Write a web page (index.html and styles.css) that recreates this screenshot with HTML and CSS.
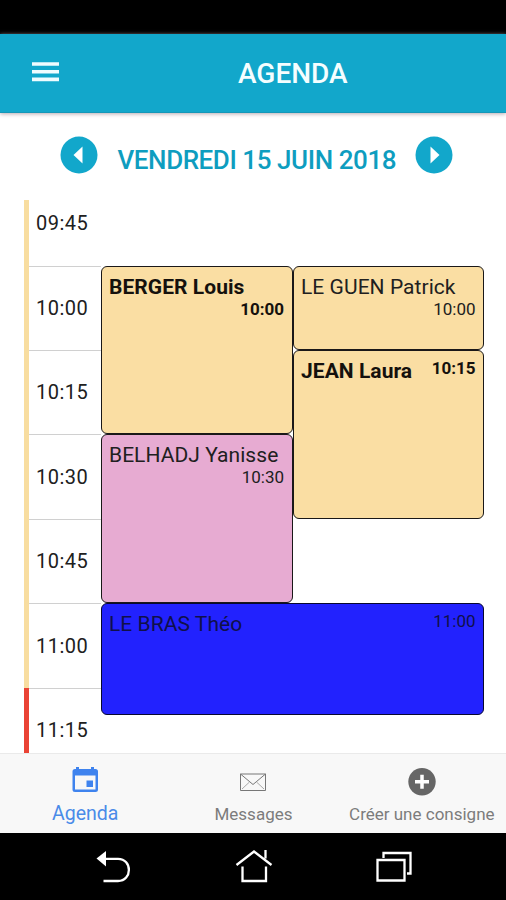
FILE: index.html
```html
<!DOCTYPE html>
<html lang="fr">
<head>
<meta charset="utf-8">
<title>Agenda</title>
<link rel="stylesheet" href="styles.css">
</head>
<body>
<div class="status"></div>
<header class="header">
  <svg class="menu" viewBox="0 0 27 20"><path d="M0 2h27M0 9.800h27M0 17.400h27"/></svg>
  <h1 class="title">AGENDA</h1>
</header>
<main class="main">
  <div class="datebar">
    <svg class="arrow" viewBox="0 0 38 38"><circle cx="19" cy="19" r="18.500"/><path d="M22.500 10.500v17L13.500 19z"/></svg>
    <div class="date">VENDREDI 15 JUIN 2018</div>
    <svg class="arrow" viewBox="0 0 38 38"><circle cx="19" cy="19" r="18.500"/><path d="M15.500 10.500v17L24.500 19z"/></svg>
  </div>
  <div class="agenda">
    <div class="bar open"></div>
    <div class="bar closed"></div>
    <div class="slot s1">09:45</div>
    <div class="slot s2">10:00</div>
    <div class="slot s3">10:15</div>
    <div class="slot s4">10:30</div>
    <div class="slot s5">10:45</div>
    <div class="slot s6">11:00</div>
    <div class="slot s7">11:15</div>
    <div class="event berger bold"><span class="name">BERGER Louis</span><span class="time">10:00</span></div>
    <div class="event leguen"><span class="name">LE GUEN Patrick</span><span class="time">10:00</span></div>
    <div class="event jean bold"><span class="name">JEAN Laura</span><span class="time">10:15</span></div>
    <div class="event belhadj"><span class="name">BELHADJ Yanisse</span><span class="time">10:30</span></div>
    <div class="event lebras"><span class="name">LE BRAS Théo</span><span class="time">11:00</span></div>
  </div>
</main>
<nav class="tabs">
  <div class="tab active">
    <svg class="icon" viewBox="0 0 28 28"><path fill-rule="evenodd" d="M5 1h3v2h12V1h3v2h1.500q2.500 0 2.500 2.500v18q0 2.500-2.500 2.500h-20.500q-2.500 0-2.500-2.500V5.500q0-2.500 2.500-2.500H5zM4 9.500v14h20.500v-14zM15.500 14.500h6.500v6.500h-6.500z"/></svg>
    <span>Agenda</span>
  </div>
  <div class="tab">
    <svg class="icon mail" viewBox="0 0 28 28"><path d="M1.500 8h25v16.500h-25z"/><path d="M1.500 8L14 18.500l12.500-10.500"/><path class="faint" d="M3 23l7.500-7M25 23l-7.500-7"/></svg>
    <span>Messages</span>
  </div>
  <div class="tab">
    <svg class="icon add" viewBox="0 0 28 28"><circle cx="14" cy="15.800" r="13.700"/><path d="M14 8.800v14M7 15.800h14"/></svg>
    <span>Créer une consigne</span>
  </div>
</nav>
<footer class="system">
  <svg viewBox="0 0 40 40"><path class="solid" d="M2.500 11.500L12 4v15.500z"/><path d="M11 11.800h13c14.500 0 14.500 22.200 0 22.200H9.500"/></svg>
  <svg viewBox="0 0 40 40"><path d="M2.500 18L20 4.500 37.500 18M31.500 11.500V3M8.500 19.500V34h23.500V19.500"/></svg>
  <svg viewBox="0 0 40 40"><path d="M3.500 13h27v20.500h-27zM9.500 11V6h27v20.500H33"/></svg>
</footer>
</body>
</html>
```
FILE: styles.css
```css
* { box-sizing: border-box; }
body {
  margin: 0;
  width: 506px;
  height: 900px;
  overflow: hidden;
  display: flex;
  flex-direction: column;
  background: #fff;
  color: #202020;
  font-family: Roboto, "Liberation Sans", sans-serif;
}
svg { display: block; flex: none; overflow: visible; }
.status { height: 34px; background: #000; }
.header {
  height: 79px;
  background: #12a7cb;
  border-bottom: 1px solid #1597b8;
  box-shadow: 0 1px 4px #b9a9b0;
  display: flex;
  align-items: center;
}
.menu { width: 27px; height: 20px; margin-left: 32px; margin-bottom: 2px; stroke: #effcff; stroke-width: 3.600; }
.title {
  margin: 2px 0 0 179px;
  font-size: 28px;
  line-height: 34px;
  font-weight: 500;
  color: #f5feff;
}
.main { height: 640px; overflow: hidden; }
.datebar { display: flex; height: 87px; padding: 23px 0 0 60px; }
.arrow { width: 38px; height: 38px; fill: #12a7cb; }
.arrow path { fill: #fff; }
.date {
  width: 280px;
  margin: 9px 17px 0 19.500px;
  font-size: 26px;
  line-height: 30px;
  font-weight: 500;
  letter-spacing: -0.430px;
  white-space: nowrap;
  color: #0e9dbf;
}
.agenda {
  display: grid;
  margin-left: 23.500px;
  grid-template-columns: 5px 72px 192px 191.500px;
  grid-template-rows: 65.600px repeat(6, 84.400px);
}
.bar { grid-column: 1; }
.open { grid-row: 1 / 7; background: #f8dda0; }
.closed { grid-row: 7; background: #ea4335; }
.slot {
  grid-column: 2;
  border-top: 1px solid #d0d0d0;
  padding: 29.400px 0 0 7.500px;
  font-size: 20px;
  line-height: 25px;
  letter-spacing: 0.500px;
}
.s1 { grid-row: 1; border-top: 0; padding-top: 11px; }
.s2 { grid-row: 2; }
.s3 { grid-row: 3; }
.s4 { grid-row: 4; }
.s5 { grid-row: 5; }
.s6 { grid-row: 6; }
.s7 { grid-row: 7; }
.event {
  border: 1px solid #1a1818;
  border-radius: 6px;
  background: #fadea3;
  padding: 8px 7.500px 0;
  display: flex;
  flex-wrap: wrap;
  align-content: flex-start;
  justify-content: space-between;
}
.name { font-size: 21px; line-height: 24px; letter-spacing: 0.050px; white-space: nowrap; }
.time { margin-left: auto; font-size: 17px; line-height: 20px; }
.bold { font-weight: 700; color: #15110d; }
.berger { grid-area: 2 / 3 / 4 / 4; }
.leguen { grid-area: 2 / 4 / 3 / 5; }
.jean { grid-area: 3 / 4 / 5 / 5; }
.belhadj { grid-area: 4 / 3 / 6 / 4; background: #e7abd2; }
.lebras { grid-area: 6 / 3 / 8 / 5; height: 112px; background: #2222fe; color: #10104a; border-color: #080830; }
.jean .time, .lebras .time { line-height: 19px; }
.tabs {
  height: 80px;
  background: #f8f8f8;
  border-top: 1px solid #eaeaea;
  display: grid;
  grid-template-columns: repeat(3, 1fr);
  padding-left: 1px;
  color: #7c7c7c;
}
.tab { display: flex; flex-direction: column; align-items: center; padding-top: 12px; font-size: 17px; line-height: 24px; white-space: nowrap; }
.tab span { margin-top: 8px; }
.icon { width: 28px; height: 28px; }
.active { color: #4a8be8; font-size: 19.500px; }
.active .icon { fill: #3f83ee; }
.mail { fill: none; stroke: #777; stroke-width: 1; }
.mail .faint { stroke: #aaa; }
.add { fill: #666; }
.add path { stroke: #fff; stroke-width: 3.500; }
.system { height: 67px; background: #000; display: flex; padding: 14px 0 0 94px; gap: 100px; }
.system svg { width: 40px; height: 40px; fill: none; stroke: #fff; stroke-width: 2.300; }
.system .solid { fill: #fff; stroke: none; }
```
